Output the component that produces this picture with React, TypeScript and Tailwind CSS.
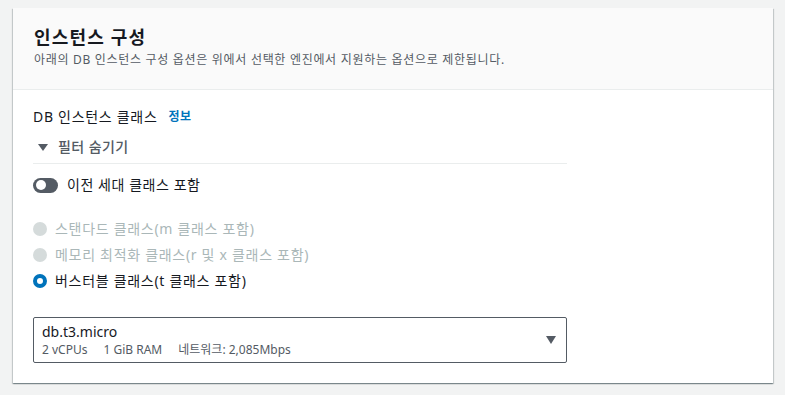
import React from "react";

export default function App() {
  const font = { fontFamily: "'Noto Sans', 'Noto Sans CJK KR', sans-serif" };
  return (
    <div className="min-h-[395px] w-[785px] bg-[#f2f3f3] pt-[8px] pl-[13px]" style={font}>
      <div className="w-[760px] bg-white shadow-[0_1px_1px_0_rgba(0,28,36,0.3),1px_1px_1px_0_rgba(0,28,36,0.15),-1px_1px_1px_0_rgba(0,28,36,0.15)]">
        <div className="bg-[#fafafa] border-b border-[#eaeded] px-[21px] pt-[16px] pb-[21px]">
          <h2 className="text-[18px] leading-[26px] font-bold tracking-[0.065em] text-[#16191f]">인스턴스 구성</h2>
          <p className="mt-[2px] text-[12px] leading-[16px] tracking-[0.058em] text-[#545b64]">
            아래의 DB 인스턴스 구성 옵션은 위에서 선택한 엔진에서 지원하는 옵션으로 제한됩니다.
          </p>
        </div>
        <div className="px-[20px] pt-[17px] pb-[20px]">
          <div className="w-[534px]">
            <div className="flex items-center text-[14px] leading-[20px] text-[#16191f]">
              <span className="tracking-[0.05em]">DB 인스턴스 클래스</span>
              <span className="ml-[11px] text-[12px] font-bold tracking-[0.05em] text-[#0073bb]">정보</span>
            </div>
            <div className="mt-[10px] flex items-center text-[14px] leading-[20px] text-[#545b64] pl-[5px]">
              <svg width="10" height="7" viewBox="0 0 10 7" className="mr-[10px]">
                <path d="M0 0 L10 0 L5 7 Z" fill="#545b64" />
              </svg>
              <span className="font-medium tracking-[0.03em]">필터 숨기기</span>
            </div>
            <div className="mt-[6px] border-t border-[#eaeded]" />
            <div className="mt-[11px] flex items-center text-[14px] leading-[20px] text-[#16191f]">
              <div className="relative h-[15px] w-[25px] rounded-full bg-[#545b64]">
                <div className="absolute left-[3px] top-[2.5px] h-[10px] w-[10px] rounded-full bg-white" />
              </div>
              <span className="ml-[9px] tracking-[0.04em]">이전 세대 클래스 포함</span>
            </div>
            <div className="mt-[24px] flex flex-col gap-[6px] text-[14px] leading-[20px] tracking-[0.05em]">
              <div className="flex items-center text-[#aab7b8]">
                <div className="h-[14px] w-[14px] rounded-full bg-[#d5dbdb]" />
                <span className="ml-[8px]">스탠다드 클래스(m 클래스 포함)</span>
              </div>
              <div className="flex items-center text-[#aab7b8]">
                <div className="h-[14px] w-[14px] rounded-full bg-[#d5dbdb]" />
                <span className="ml-[8px]">메모리 최적화 클래스(r 및 x 클래스 포함)</span>
              </div>
              <div className="flex items-center text-[#16191f]">
                <div className="h-[14px] w-[14px] rounded-full border-[4px] border-[#0073bb] bg-white" />
                <span className="ml-[8px]">버스터블 클래스(t 클래스 포함)</span>
              </div>
            </div>
            <div className="mt-[26px] flex h-[46px] items-center justify-between rounded-[2px] border border-[#545b64] pl-[8px] pr-[10px]">
              <div className="flex flex-col">
                <span className="text-[14px] leading-[18px] text-[#16191f]">db.t3.micro</span>
                <span className="mt-[1px] text-[12px] leading-[16px] text-[#545b64]">
                  <span className="mr-[16px]">2 vCPUs</span>
                  <span className="mr-[16px]">1 GiB RAM</span>
                  <span>네트워크: 2,085Mbps</span>
                </span>
              </div>
              <svg width="10" height="8" viewBox="0 0 10 8">
                <path d="M0 0 L10 0 L5 8 Z" fill="#545b64" />
              </svg>
            </div>
          </div>
        </div>
      </div>
    </div>
  );
}
